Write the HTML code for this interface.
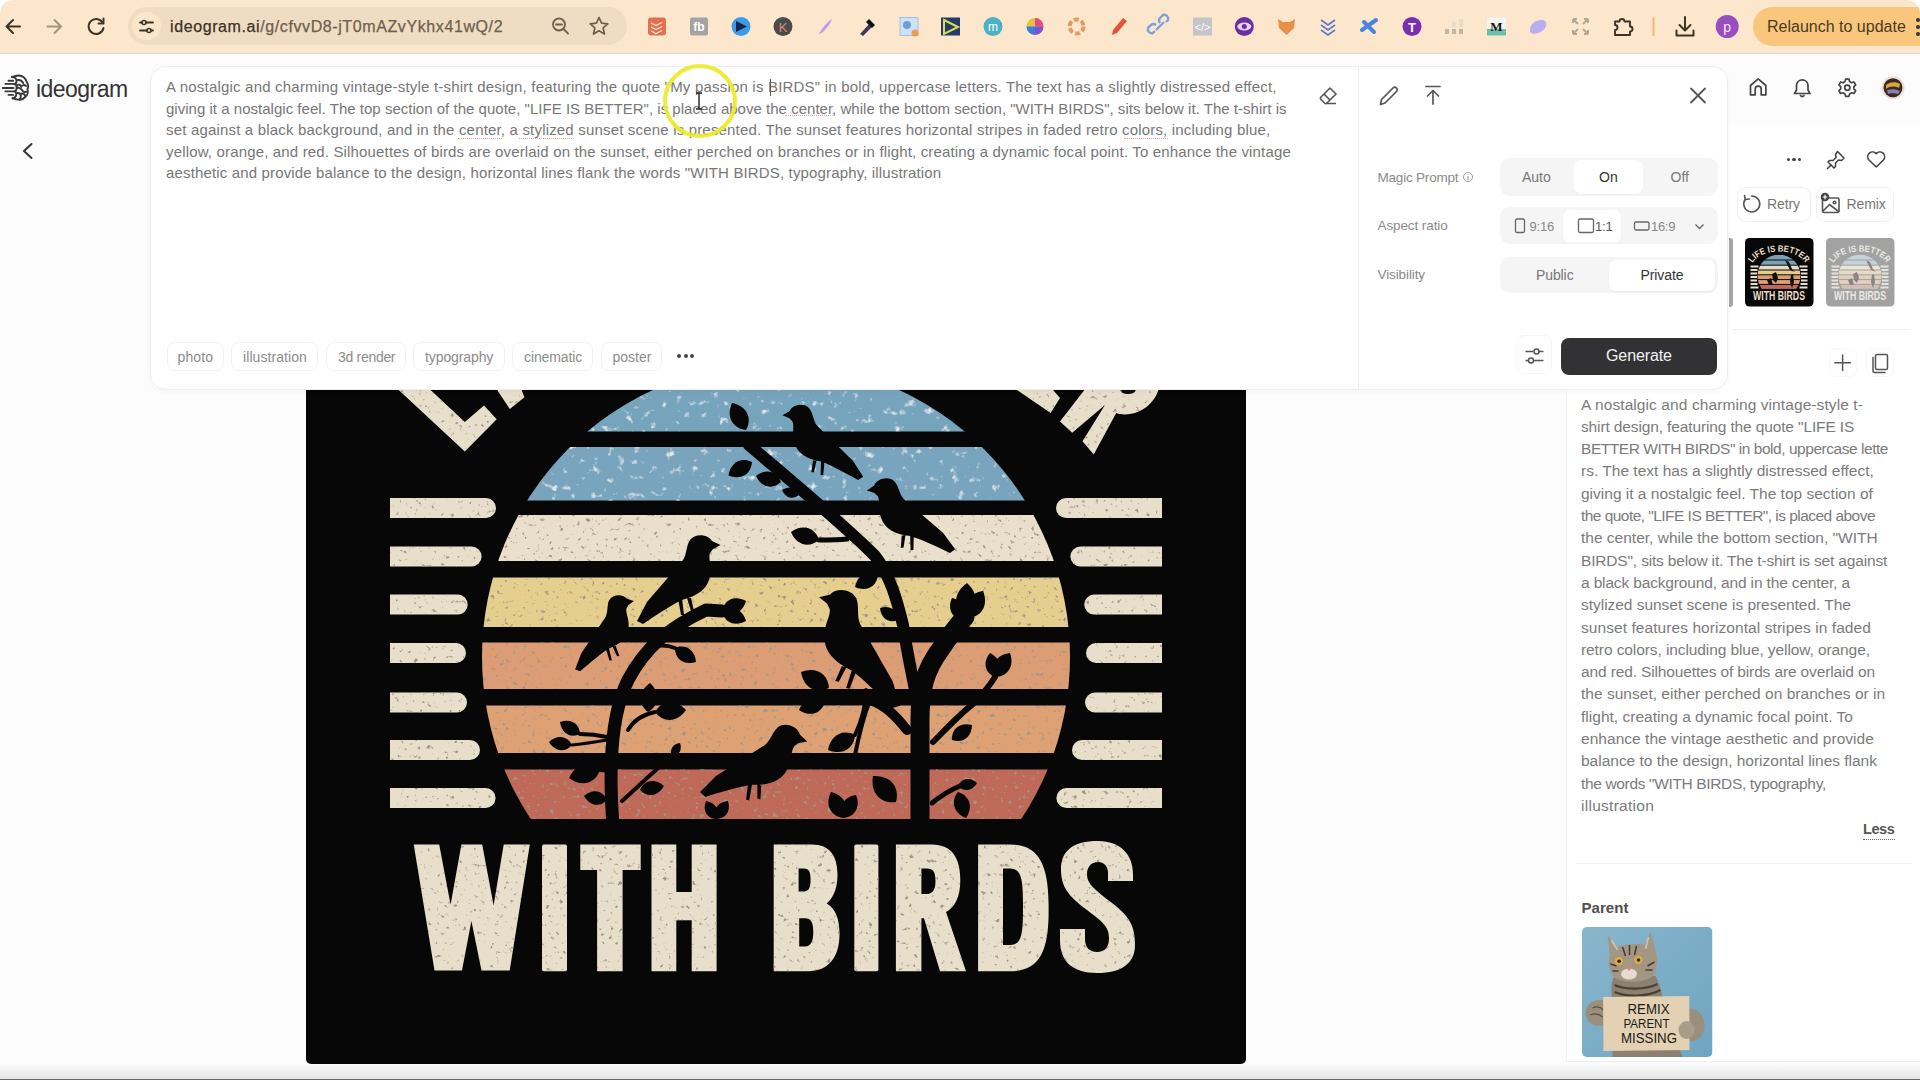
<!DOCTYPE html>
<html><head><meta charset="utf-8"><title>ideogram</title>
<style>
*{margin:0;padding:0;box-sizing:border-box}
html,body{width:1920px;height:1080px;overflow:hidden;background:#fcfcfc;font-family:"Liberation Sans",sans-serif;position:relative;-webkit-font-smoothing:antialiased}
.a{position:absolute}
.t{position:absolute;white-space:pre;line-height:1}
svg{position:absolute;overflow:visible}
</style></head><body>

<!-- ===== BROWSER BAR ===== -->
<div class="a" style="left:0;top:0;width:1920px;height:54px;background:#fde7cc;border-bottom:1px solid #e6d6c2"></div>
<!-- URL pill -->
<div class="a" style="left:128px;top:7px;width:499px;height:38px;border-radius:19px;background:#f0dcc2"></div>
<div class="a" style="left:132px;top:12px;width:29px;height:28px;border-radius:14px;background:#fbe6cc"></div>
<div class="t" style="left:170px;top:19px;font-size:16px;letter-spacing:0.6px;color:#6c604f;-webkit-text-stroke:0.25px currentColor"><span style="color:#3b3126">ideogram.ai</span>/g/cfvvD8-jT0mAZvYkhx41wQ/2</div>

<!-- toolbar icons -->
<svg style="left:0;top:0" width="1920" height="54" viewBox="0 0 1920 54">
<g fill="none" stroke="#3d3428" stroke-width="2" stroke-linecap="round" stroke-linejoin="round">
<path d="M20 26.5H7M13 20L6.5 26.5L13 33"/>
<path d="M47.5 26.5H60.5M54.5 20L61 26.5L54.5 33" stroke="#a3927e"/>
<path d="M102.5 22.5A7.5 7.5 0 1 0 103.5 28" />
<path d="M103.5 18.5V23.5H98.5" />
<path d="M140 22.5H142M146 22.5H153M140 30.5H147M151 30.5H153" stroke-width="1.8"/>
<circle cx="144" cy="22.5" r="2" stroke-width="1.6"/><circle cx="149" cy="30.5" r="2" stroke-width="1.6"/>
<circle cx="559" cy="24.5" r="6" stroke="#6b5f4f" stroke-width="1.8"/><path d="M563.5 29L568 33.5M556 24.5H562" stroke="#6b5f4f" stroke-width="1.8"/>
<path d="M599 17.5L601.6 23.2L607.8 23.8L603.1 27.9L604.5 34L599 30.8L593.5 34L594.9 27.9L590.2 23.8L596.4 23.2Z" stroke="#6b5f4f" stroke-width="1.7"/>
<path d="M1615 21.5H1619.5A2.5 2.5 0 0 1 1624.5 21.5H1630V26.5A2.5 2.5 0 0 1 1630 31.5V35H1615V30A2.5 2.5 0 0 0 1615 25Z" stroke="#3d3428" stroke-width="1.9"/>
<path d="M1653.5 18V35" stroke="#f2b86e" stroke-width="2"/>
<path d="M1685 17V30M1679.5 25L1685 30.5L1690.5 25M1676.5 30.5V35.5H1693.5V30.5" stroke-width="2"/>
</g>
<!-- extensions -->
<rect x="648" y="17.5" width="18" height="18" rx="3" fill="#e37050"/><path d="M651 23l5 2.5 6-3M651 27l5 2.5 6-3M651 31l5 2.5 6-3" stroke="#fde7cc" stroke-width="1.3" fill="none"/>
<rect x="690" y="17.5" width="18" height="18" rx="2" fill="#a3a3a3"/><text x="699" y="31" font-size="12" font-weight="700" fill="#fff" text-anchor="middle" font-family="Liberation Sans">fb</text>
<circle cx="741" cy="26.5" r="9.5" fill="#3a9be8"/><path d="M736 21L747 26.5L736 32Z" fill="#15264a"/>
<circle cx="783" cy="26.5" r="9.5" fill="#4b4b4b"/><text x="783" y="31.5" font-size="13" fill="#d88a7a" text-anchor="middle" font-family="Liberation Sans">K</text>
<path d="M819 34C822 28 827 22 832 19C830 24 826 30 820 34Z" fill="#c59ae8"/>
<path d="M860 34L870 23L873 26L863 36Z" fill="#3a3a60"/><path d="M869 19L875 25L872 28L866 22Z" fill="#111"/>
<rect x="900" y="17.5" width="18" height="18" fill="#cfe2f5" stroke="#9cc2ea" stroke-width="1"/><circle cx="907" cy="25" r="4" fill="#6b9fd8"/><circle cx="915" cy="33" r="3.5" fill="#ec9c56"/>
<rect x="941" y="17.5" width="19" height="18" fill="#273b6a"/><path d="M944 20L958 27L944 34Z" fill="none" stroke="#d8e04b" stroke-width="2"/>
<circle cx="993" cy="26.5" r="9.5" fill="#4cb1c2"/><text x="993" y="30.5" font-size="12" fill="#fff" text-anchor="middle" font-family="Liberation Sans">m</text>
<circle cx="1035" cy="26.5" r="8.5" fill="#e6c33c"/><path d="M1035 18A8.5 8.5 0 0 1 1043.5 26.5H1035Z" fill="#e64a8b"/><path d="M1035 35A8.5 8.5 0 0 1 1026.5 26.5H1035Z" fill="#3d7de0"/><path d="M1043.5 26.5A8.5 8.5 0 0 1 1035 35V26.5Z" fill="#7b4fd8"/>
<circle cx="1076.6" cy="26.5" r="7" fill="none" stroke="#e59a64" stroke-width="4" stroke-dasharray="5 2.5"/>
<path d="M1112 35L1113 30L1123 18L1127 21L1117 33Z" fill="#e2553a"/>
<path d="M1155 31l-2 2a4 4 0 0 1-5-5l3-3a4 4 0 0 1 5 0M1166 22l2-2a4 4 0 0 0-5-5l-3 3a4 4 0 0 0 0 5M1156 30l8-8" fill="none" stroke="#7ba2e0" stroke-width="2.4"/>
<rect x="1193" y="17.5" width="19" height="18" fill="#c3c5cb"/><text x="1202.5" y="30.5" font-size="11" fill="#fff" text-anchor="middle" font-family="Liberation Sans">&lt;/&gt;</text>
<circle cx="1244.3" cy="26.5" r="9.5" fill="#6b2f9e"/><ellipse cx="1244.3" cy="26.5" rx="7" ry="4" fill="#e8d0f5"/><circle cx="1244.3" cy="26.5" r="2.5" fill="#6b2f9e"/>
<path d="M1278 19L1283 22H1290L1295 19L1294 28L1286.5 35L1279 28Z" fill="#e8904a"/>
<path d="M1321 20L1328 25L1335 20M1321 25L1328 30L1335 25M1321 30L1328 35L1335 30" fill="none" stroke="#5a77c8" stroke-width="1.6"/>
<path d="M1362 30L1376 20M1364 22L1374 32" stroke="#4a84e0" stroke-width="4" stroke-linecap="round"/>
<circle cx="1412" cy="26.5" r="9.5" fill="#7a2fb0"/><text x="1412" y="31.5" font-size="13" font-weight="700" fill="#fff" text-anchor="middle" font-family="Liberation Sans">T</text>
<path d="M1445 29h4v5h-4zM1452 29h4v5h-4zM1459 29h4v5h-4z" fill="#c1b5a4"/><path d="M1452 22h4v5h-4zM1459 19h4v8h-4z" fill="#e5dccf"/>
<rect x="1487" y="17.5" width="19" height="18" fill="#f4f4f4"/><rect x="1487" y="29" width="19" height="6.5" fill="#6cc0a8"/><text x="1496.5" y="31" font-size="13" font-weight="700" fill="#111" text-anchor="middle" font-family="Liberation Serif">M</text>
<path d="M1530 32C1529 25 1535 19 1543 20C1548 21 1547 28 1542 31C1538 34 1532 35 1530 32Z" fill="#b9aef0"/>
<path d="M1573 19L1578 24M1588 19L1583 24M1573 34L1578 29M1588 34L1583 29M1573 19h4M1573 19v4M1588 19h-4M1588 19v4M1573 34h4M1573 34v-4M1588 34h-4M1588 34v-4" stroke="#b0a796" stroke-width="2" fill="none"/>
<circle cx="1727.2" cy="26.5" r="11.5" fill="#9a4dbf"/><text x="1727.2" y="31.5" font-size="14" fill="#f3e6fa" text-anchor="middle" font-family="Liberation Sans">p</text>
</svg>
<div class="a" style="left:1753px;top:7px;width:200px;height:39px;border-radius:19.5px;background:#f9c67b"></div>
<div class="t" style="left:1767px;top:19px;font-size:16px;color:#4b3a1f;letter-spacing:0px">Relaunch to update</div>
<div class="a" style="left:1916px;top:18px;width:4px;height:4px;border-radius:2px;background:#333"></div>
<div class="a" style="left:1916px;top:25px;width:4px;height:4px;border-radius:2px;background:#333"></div>
<div class="a" style="left:1916px;top:32px;width:4px;height:4px;border-radius:2px;background:#333"></div>
<div class="a" style="left:0;top:0;width:12px;height:12px;background:radial-gradient(circle at 12px 12px,transparent 11px,#fff 12px)"></div>
<div class="a" style="left:1908px;top:0;width:12px;height:12px;background:radial-gradient(circle at 0 12px,transparent 11px,#fff 12px)"></div>

<!-- ===== PAGE ===== -->
<!-- main image -->

<svg style="left:306px;top:390px;clip-path:inset(0 round 0 0 5px 5px)" width="940" height="674" viewBox="306 390 940 674">
<defs>
<filter id="gr" x="0" y="0" width="100%" height="100%">
<feTurbulence type="fractalNoise" baseFrequency="0.22" numOctaves="2" seed="7" result="n"/>
<feColorMatrix in="n" type="matrix" values="0 0 0 0 0.35  0 0 0 0 0.31  0 0 0 0 0.25  -7 0 0 0 2.5" result="sp"/>
<feComposite in="sp" in2="SourceGraphic" operator="in" result="spIn"/>
<feMerge><feMergeNode in="SourceGraphic"/><feMergeNode in="spIn"/></feMerge>
</filter>
<filter id="grb" x="0" y="0" width="100%" height="100%">
<feTurbulence type="fractalNoise" baseFrequency="0.12" numOctaves="3" seed="11" result="n"/>
<feColorMatrix in="n" type="matrix" values="0 0 0 0 0.8  0 0 0 0 0.87  0 0 0 0 0.92  4 0 0 0 -2.55" result="sp"/>
<feComposite in="sp" in2="SourceGraphic" operator="in" result="spIn"/>
<feMerge><feMergeNode in="SourceGraphic"/><feMergeNode in="spIn"/></feMerge>
</filter>
<clipPath id="sun"><circle cx="776" cy="657" r="294"/></clipPath>
<path id="bird" d="M17.5 1 L9 -3 C5 -10 -8 -11 -13 -4 C-17 2 -16 10 -20 16 C-30 28 -45 45 -56 58 L-66 77 L-60 80 C-45 70 -30 60 -21 56 C-6 52 5 45 7 32 C9 22 5 14 7 9 L10 5 Z M-25 54 L-22 71 L-19 71 L-21 54 Z M-16 54 L-12 67 L-9 67 L-12 54 Z"/>
</defs>
<rect x="306" y="390" width="940" height="674" fill="#070707"/>
<g clip-path="url(#sun)" filter="url(#grb)">
<rect x="400" y="340" width="760" height="91.5" fill="#77a4bd"/>
<rect x="400" y="447" width="760" height="53.5" fill="#78a5bd"/>
</g>
<g clip-path="url(#sun)" filter="url(#gr)">
<rect x="400" y="515" width="760" height="46" fill="#e9dfcb"/>
<rect x="400" y="577.5" width="760" height="49.5" fill="#e6ce8e"/>
<rect x="400" y="642.5" width="760" height="46.5" fill="#dc9d75"/>
<rect x="400" y="705.5" width="760" height="47.5" fill="#dea173"/>
<rect x="400" y="769.5" width="760" height="49.5" fill="#bf6959"/>
</g>
<g fill="#e8dfca" filter="url(#gr)">
<path d="M390 498h96a10 10 0 0 1 0 20h-96z"/>
<path d="M390 546.5h81.6a10 10 0 0 1 0 20h-81.6z"/>
<path d="M390 594.6h67.7a10 10 0 0 1 0 20h-67.7z"/>
<path d="M390 643h66a10 10 0 0 1 0 20h-66z"/>
<path d="M390 692.5h67a10 10 0 0 1 0 20h-67z"/>
<path d="M390 740h80a10 10 0 0 1 0 20h-80z"/>
<path d="M390 788h95.6a10 10 0 0 1 0 20h-95.6z"/>
<path d="M1162 498h-96a10 10 0 0 0 0 20h96z"/>
<path d="M1162 546.5h-81.6a10 10 0 0 0 0 20h81.6z"/>
<path d="M1162 594.6h-67.7a10 10 0 0 0 0 20h67.7z"/>
<path d="M1162 643h-66a10 10 0 0 0 0 20h66z"/>
<path d="M1162 692.5h-67a10 10 0 0 0 0 20h67z"/>
<path d="M1162 740h-80a10 10 0 0 0 0 20h80z"/>
<path d="M1162 788h-95.6a10 10 0 0 0 0 20h95.6z"/>
<!-- arc text remnants -->
<path d="M398.7 390 L430.6 390 L464.8 422 L484 405.6 L496.7 419.2 L464.8 451.6 Z"/>
<path d="M497.2 390 L521.6 390 L524.4 397.2 L509.8 409 Z"/>
<path d="M1017 390 L1053 390 L1060 398 L1050.6 413 Z"/>
<path d="M1084.4 390 L1060 421.6 L1072.2 432.8 L1105 405 L1082.5 441.2 L1093.7 454.4 L1116.2 413 C1130 418 1152 410 1158.4 390 Z"/>
<ellipse cx="1128" cy="390.5" rx="7.5" ry="3.5" fill="#070707"/>
<!-- WITH BIRDS -->
<path d="M413.7 844.4 L439.2 844.4 L450.6 904.8 L461.4 844.4 L482.2 844.4 L493.6 905.5 L503.7 844.4 L529.8 844.4 L509.7 970.6 L481.5 970.6 L471.4 920.9 L462 970.6 L434.5 970.6 Z"/>
<rect x="542" y="844.4" width="25" height="126.8" rx="2"/>
<path d="M580.3 844.4 H640.7 V870 H622.6 V971.2 H597.1 V870 H580.3 Z"/>
<path d="M651.5 844.4 H676.3 V892 H691.7 V844.4 H716.6 V971.2 H691.7 V920.2 H676.3 V971.2 H651.5 Z"/>
<path fill-rule="evenodd" d="M773.7 844.4 H812 C830 844.4 837.5 856 837.5 875 C837.5 890 832 899 826.7 903.5 C835 908 839.5 918 839.5 934 C839.5 958 828 971.2 808 971.2 H773.7 Z M798.6 868.6 V891.4 H804 C809 891.4 810.6 887 810.6 880 C810.6 872 809 868.6 804 868.6 Z M799.2 918.2 V946.4 H805 C811 946.4 813.3 941 813.3 932 C813.3 922 811 918.2 805 918.2 Z"/>
<rect x="854.3" y="844.4" width="24.1" height="126.8" rx="2"/>
<path fill-rule="evenodd" d="M895.9 844.4 H932 C952 844.4 960.3 858 960.3 880 C960.3 897 955 907 946 912 L966 971.2 H940 L924 918.2 H921.4 V971.2 H895.9 Z M921.4 868.6 V894 H927 C933 894 935.5 889 935.5 881 C935.5 872 933 868.6 927 868.6 Z"/>
<path fill-rule="evenodd" d="M978.1 844.4 H1010 C1037 844.4 1048.6 862 1048.6 905 V912 C1048.6 955 1037 971.2 1010 971.2 H978.1 Z M1003 868.6 V945 H1010 C1020 945 1023 938 1023 912 V902 C1023 876 1020 868.6 1010 868.6 Z"/>
<path d="M1098 841 C1121 841 1133 855 1133 874 V881 H1108 V873 C1108 866 1104 862 1098 862 C1091 862 1087 867 1087 874 C1087 884 1094 889 1112 903 C1130 917 1135 926 1135 945 C1135 963 1122 973 1097 973 C1072 973 1060 961 1060 940 V929 H1085 V939 C1085 947 1089 952 1097 952 C1105 952 1109 947 1109 938 C1109 927 1103 922 1087 910 C1067 895 1061 886 1061 869 C1061 851 1073 841 1098 841 Z"/>
</g>
<!-- branches -->
<g fill="none" stroke="#070707" stroke-linecap="round" stroke-linejoin="round">
<path d="M749 445 C790 480 850 530 875 556 C890 575 897 600 903 625 C908 660 918 700 920 720" stroke-width="12"/>
<path d="M920 825 V720 C920 690 925 670 940 650 C950 635 958 625 965 617" stroke-width="19"/>
<path d="M907 730 C895 715 885 705 870 700" stroke-width="10"/>
<path d="M870 700 C862 720 858 740 855 755" stroke-width="4"/>
<path d="M613 825 C608 760 612 712 628 680 C645 648 668 628 706 610 L722 611" stroke-width="13"/>
<path d="M628 730 C635 718 645 714 655 712" stroke-width="4"/>
<path d="M607 737 C598 735 590 734 580 734" stroke-width="4"/>
<path d="M607 740 C595 742 582 744 572 745" stroke-width="3"/>
<path d="M614 772 C610 771 605 770 600 770" stroke-width="4"/>
<path d="M622 801 C640 785 655 770 672 756" stroke-width="4"/>
<path d="M655 646 C663 645 670 646 675 648" stroke-width="4"/>
<path d="M847 539 C838 540 828 540 819 540" stroke-width="5"/>
<path d="M933 742 C950 725 962 712 972 705 C982 695 990 685 995 677" stroke-width="6"/>
<path d="M932 803 C942 795 950 790 960 786" stroke-width="5"/>
<path d="M855 735 C862 720 866 705 866 690" stroke-width="4"/>
</g>
<g fill="#070707">
<path d="M0 0C7.6 -11.6 21.3 -11.6 30.4 0C21.3 11.6 7.6 11.6 0 0Z" transform="translate(746 430) rotate(-117.4)"/>
<path d="M0 0C6.8 -10.3 19.0 -10.3 27.2 0C19.0 10.3 6.8 10.3 0 0Z" transform="translate(752 462) rotate(150)"/>
<path d="M0 0C6.4 -9.8 18.0 -9.8 25.7 0C18.0 9.8 6.4 9.8 0 0Z" transform="translate(781 482) rotate(-166.5)"/>
<path d="M0 0C4.4 -6.7 12.4 -6.7 17.7 0C12.4 6.7 4.4 6.7 0 0Z" transform="translate(799 495) rotate(-163.6)"/>
<path d="M0 0C7.3 -11.1 20.4 -11.1 29.1 0C20.4 11.1 7.3 11.1 0 0Z" transform="translate(819 540) rotate(-164.1)"/>
<path d="M0 0C6.5 -9.9 18.2 -9.9 25.9 0C18.2 9.9 6.5 9.9 0 0Z" transform="translate(878 575) rotate(152.4)"/>
<path d="M0 0C6.5 -9.9 18.2 -9.9 26.0 0C18.2 9.9 6.5 9.9 0 0Z" transform="translate(722 611) rotate(-22.6)"/>
<path d="M0 0C6.5 -9.9 18.2 -9.9 26.0 0C18.2 9.9 6.5 9.9 0 0Z" transform="translate(722 611) rotate(22.6)"/>
<path d="M0 0C6.3 -9.6 17.7 -9.6 25.2 0C17.7 9.6 6.3 9.6 0 0Z" transform="translate(675 648) rotate(33.7)"/>
<path d="M0 0C7.8 -11.8 21.7 -11.8 31.1 0C21.7 11.8 7.8 11.8 0 0Z" transform="translate(655 712) rotate(-3.7)"/>
<path d="M0 0C7.3 -11.0 20.3 -11.0 29.1 0C20.3 11.0 7.3 11.0 0 0Z" transform="translate(648 712) rotate(-86.1)"/>
<path d="M0 0C5.8 -8.9 16.3 -8.9 23.3 0C16.3 8.9 5.8 8.9 0 0Z" transform="translate(580 734) rotate(-149.0)"/>
<path d="M0 0C5.8 -8.8 16.2 -8.8 23.2 0C16.2 8.8 5.8 8.8 0 0Z" transform="translate(572 745) rotate(-172.6)"/>
<path d="M0 0C8.0 -12.2 22.4 -12.2 32.0 0C22.4 12.2 8.0 12.2 0 0Z" transform="translate(600 770) rotate(165.5)"/>
<path d="M0 0C5.8 -8.9 16.3 -8.9 23.3 0C16.3 8.9 5.8 8.9 0 0Z" transform="translate(607 800) rotate(-170.1)"/>
<path d="M0 0C6.1 -9.2 17.0 -9.2 24.3 0C17.0 9.2 6.1 9.2 0 0Z" transform="translate(640 790) rotate(-9.5)"/>
<path d="M0 0C3.8 -5.8 10.7 -5.8 15.3 0C10.7 5.8 3.8 5.8 0 0Z" transform="translate(672 756) rotate(-58.4)"/>
<path d="M0 0C5.1 -7.8 14.4 -7.8 20.6 0C14.4 7.8 5.1 7.8 0 0Z" transform="translate(716 819) rotate(-119.1)"/>
<path d="M0 0C5.4 -8.2 15.1 -8.2 21.6 0C15.1 8.2 5.4 8.2 0 0Z" transform="translate(716 819) rotate(-56.3)"/>
<path d="M0 0C8.1 -12.3 22.6 -12.3 32.2 0C22.6 12.3 8.1 12.3 0 0Z" transform="translate(829 688) rotate(-150.3)"/>
<path d="M0 0C6.8 -10.3 19.0 -10.3 27.2 0C19.0 10.3 6.8 10.3 0 0Z" transform="translate(825 702) rotate(162.9)"/>
<path d="M0 0C7.7 -11.7 21.6 -11.7 30.9 0C21.6 11.7 7.7 11.7 0 0Z" transform="translate(855 735) rotate(150.9)"/>
<path d="M0 0C7.2 -10.9 20.0 -10.9 28.6 0C20.0 10.9 7.2 10.9 0 0Z" transform="translate(843 818) rotate(-114.8)"/>
<path d="M0 0C6.6 -10.0 18.5 -10.0 26.4 0C18.5 10.0 6.6 10.0 0 0Z" transform="translate(843 818) rotate(-60.5)"/>
<path d="M0 0C8.7 -13.2 24.3 -13.2 34.7 0C24.3 13.2 8.7 13.2 0 0Z" transform="translate(896 802) rotate(-131.5)"/>
<path d="M0 0C5.4 -8.2 15.1 -8.2 21.6 0C15.1 8.2 5.4 8.2 0 0Z" transform="translate(898 620) rotate(-146.3)"/>
<path d="M0 0C6.1 -9.3 17.2 -9.3 24.6 0C17.2 9.3 6.1 9.3 0 0Z" transform="translate(963 620) rotate(-116.6)"/>
<path d="M0 0C8.8 -13.3 24.5 -13.3 35.1 0C24.5 13.3 8.8 13.3 0 0Z" transform="translate(965 618) rotate(-86.7)"/>
<path d="M0 0C7.7 -11.7 21.6 -11.7 30.9 0C21.6 11.7 7.7 11.7 0 0Z" transform="translate(968 618) rotate(-60.9)"/>
<path d="M0 0C6.1 -9.3 17.2 -9.3 24.5 0C17.2 9.3 6.1 9.3 0 0Z" transform="translate(995 677) rotate(-101.8)"/>
<path d="M0 0C7.1 -10.8 19.8 -10.8 28.3 0C19.8 10.8 7.1 10.8 0 0Z" transform="translate(995 677) rotate(-58.0)"/>
<path d="M0 0C6.2 -9.5 17.5 -9.5 25.0 0C17.5 9.5 6.2 9.5 0 0Z" transform="translate(952 740) rotate(-36.9)"/>
<path d="M0 0C4.8 -7.3 13.5 -7.3 19.2 0C13.5 7.3 4.8 7.3 0 0Z" transform="translate(958 786) rotate(-9.0)"/>
<path d="M0 0C6.8 -10.3 19.0 -10.3 27.2 0C19.0 10.3 6.8 10.3 0 0Z" transform="translate(958 792) rotate(72.9)"/>
<use href="#bird" transform="translate(798 413) scale(-1 1) rotate(5) scale(0.9)"/>
<use href="#bird" transform="translate(883 487) scale(-1 1) rotate(8.6) scale(0.94)"/>
<use href="#bird" transform="translate(703 544) scale(1 1)"/>
<use href="#bird" transform="translate(620 602) rotate(-7) scale(0.8)"/>
<use href="#bird" transform="translate(840 600) scale(-1 1) rotate(-11) scale(1.2)"/>
<use href="#bird" transform="translate(790 735) rotate(17) scale(1.05)"/>
</g>
</svg>


<!-- right panel -->
<div class="a" style="left:1566px;top:125px;width:354px;height:937px;background:#fff;border-left:1px solid #f1f1f1;border-bottom:1px solid #eee"></div>

<!-- right header icons -->
<svg style="left:1740px;top:70px" width="180" height="36" viewBox="1740 70 180 36">
<g fill="none" stroke="#444" stroke-width="1.7" stroke-linecap="round" stroke-linejoin="round">
<path d="M1750.5 85.5L1758.2 78.8L1765.9 85.5V94.8H1761.2V89.2A3 3 0 0 0 1755.2 89.2V94.8H1750.5Z"/>
<path d="M1796.5 90V85A5.8 5.8 0 0 1 1808 85V90L1810 93.5H1794.5Z"/><path d="M1800.5 95.5A2 2 0 0 0 1804 95.5"/>
<circle cx="1847.3" cy="87.7" r="2.6"/>
<path d="M1845.6 79.2h3.4l.6 2.4 2 1.1 2.4-.7 1.7 2.9-1.8 1.7v2.3l1.8 1.7-1.7 2.9-2.4-.7-2 1.1-.6 2.4h-3.4l-.6-2.4-2-1.1-2.4.7-1.7-2.9 1.8-1.7v-2.3l-1.8-1.7 1.7-2.9 2.4.7 2-1.1z"/>
</g>
<circle cx="1893" cy="87.7" r="11.5" fill="#f1dcd6"/>
<circle cx="1893" cy="87.7" r="9.5" fill="#3a2a20"/>
<path d="M1886 85C1889 82 1896 81 1900 84L1899 88C1895 86 1890 86 1886 89Z" fill="#d8a83a"/>
<path d="M1887 90C1891 89 1896 89 1900 91L1898 94C1894 93 1890 93 1888 94Z" fill="#8a7ab8"/>
</svg>

<!-- right panel items -->
<div class="a" style="left:1786.7px;top:157.5px;width:3.6px;height:3.6px;border-radius:50%;background:#444"></div>
<div class="a" style="left:1792.2px;top:157.5px;width:3.6px;height:3.6px;border-radius:50%;background:#444"></div>
<div class="a" style="left:1797.7px;top:157.5px;width:3.6px;height:3.6px;border-radius:50%;background:#444"></div>
<svg style="left:1820px;top:145px" width="75" height="28" viewBox="1820 145 75 28">
<g fill="none" stroke="#444" stroke-width="1.6" stroke-linecap="round" stroke-linejoin="round">
<path d="M1837.5 151.5L1844 158L1841.5 160.5L1838.5 160L1835.5 163L1835.5 166.5L1834 168L1828 162L1829.5 160.5L1833 160.5L1836 157.5L1835.5 154.5Z"/>
<path d="M1831 165L1827.5 168.5"/>
<path d="M1876.2 167L1869 160A4.4 4.4 0 0 1 1876.2 153.6A4.4 4.4 0 0 1 1883.4 160Z"/>
</g>
</svg>
<div class="a" style="left:1736.5px;top:187px;width:74px;height:34.5px;border-radius:9px;border:1px solid #f0f0f0;background:#fff"></div>
<div class="a" style="left:1816px;top:187px;width:78px;height:34.5px;border-radius:9px;border:1px solid #f0f0f0;background:#fff"></div>
<svg style="left:1740px;top:190px" width="110" height="30" viewBox="1740 190 110 30">
<g fill="none" stroke="#555" stroke-width="1.6" stroke-linecap="round" stroke-linejoin="round">
<path d="M1745.3 199.3A8 8 0 1 0 1751.5 196"/><path d="M1744.5 195.5L1745.3 199.5L1749.3 199"/>
<rect x="1822.5" y="198" width="16.5" height="14.5" rx="1.5"/><path d="M1823 211L1829.5 204.5L1838.5 211.5"/><circle cx="1834.5" cy="202.5" r="1.3"/>
</g>
<circle cx="1825" cy="197" r="4.3" fill="#444"/><path d="M1825 194.8V199.2M1822.8 197H1827.2" stroke="#fff" stroke-width="1.2"/>
</svg>
<div class="t" style="left:1767px;top:197px;font-size:14px;color:#777;letter-spacing:-0.1px">Retry</div>
<div class="t" style="left:1846.5px;top:197px;font-size:14px;color:#777;letter-spacing:-0.1px">Remix</div>

<!-- thumbnails -->
<div class="a" style="left:1728.5px;top:238px;width:4px;height:69px;background:#a6a6a6;border-radius:0 3px 3px 0"></div>
<svg style="left:1744.9px;top:238px" width="69" height="69" viewBox="0 0 69 69">
<defs><clipPath id="tc1"><circle cx="34" cy="38" r="21.5"/></clipPath><path id="arc1" d="M7 29A27 15.5 0 0 1 61 29"/></defs>
<rect width="68.5" height="68.5" rx="4.5" fill="#080808"/>
<g clip-path="url(#tc1)"><rect x="0" y="17" width="69" height="4.5" fill="#7aa2b7"/><rect x="0" y="22.5" width="69" height="4.2" fill="#7aa2b7"/><rect x="0" y="27.7" width="69" height="3.8" fill="#e6dbc5"/><rect x="0" y="32.5" width="69" height="3.8" fill="#e4cc8c"/><rect x="0" y="37.3" width="69" height="3.8" fill="#dc9d75"/><rect x="0" y="42.1" width="69" height="3.8" fill="#dea173"/><rect x="0" y="46.9" width="69" height="4" fill="#bf6959"/></g>
<g fill="#111"><path d="M40 22L44 24L47 31L50 34L45 32L42 26Z"/><path d="M27 36L31 34L33 40L31 45L28 42Z"/><path d="M46 37L48 36L49 44L47 50L45 44Z"/><path d="M22 42L26 40L28 47L24 47Z"/></g>
<g fill="#e8dfca"><rect x="5.5" y="27.5" width="8" height="2"/><rect x="5.5" y="31" width="7" height="2"/><rect x="5.5" y="34.5" width="6.5" height="2"/><rect x="5.5" y="38" width="6.5" height="2"/><rect x="5.5" y="41.5" width="6.5" height="2"/><rect x="5.5" y="45" width="7" height="2"/><rect x="5.5" y="48.5" width="8" height="2"/>
<rect x="54.5" y="27.5" width="8" height="2"/><rect x="55.5" y="31" width="7" height="2"/><rect x="56" y="34.5" width="6.5" height="2"/><rect x="56" y="38" width="6.5" height="2"/><rect x="56" y="41.5" width="6.5" height="2"/><rect x="55.5" y="45" width="7" height="2"/><rect x="54.5" y="48.5" width="8" height="2"/></g>
<text font-size="9" font-weight="700" fill="#e8dfca" font-family="Liberation Sans"><textPath href="#arc1" startOffset="50%" text-anchor="middle" textLength="60" lengthAdjust="spacingAndGlyphs">LIFE IS BETTER</textPath></text>
<text x="34" y="62.3" font-size="12.5" font-weight="700" fill="#e8dfca" text-anchor="middle" font-family="Liberation Sans" textLength="52" lengthAdjust="spacingAndGlyphs">WITH BIRDS</text>
</svg>
<svg style="left:1826.1px;top:238px" width="69" height="69" viewBox="0 0 69 69">
<defs><clipPath id="tc2"><circle cx="34" cy="38" r="21.5"/></clipPath><path id="arc2" d="M7 29A27 15.5 0 0 1 61 29"/></defs>
<rect width="68.5" height="68.5" rx="4.5" fill="#a2a2a2"/>
<g clip-path="url(#tc2)"><rect x="0" y="17" width="69" height="4.5" fill="#c5d2d8"/><rect x="0" y="22.5" width="69" height="4.2" fill="#c5d2d8"/><rect x="0" y="27.7" width="69" height="3.8" fill="#e9e4da"/><rect x="0" y="32.5" width="69" height="3.8" fill="#e6dcc3"/><rect x="0" y="37.3" width="69" height="3.8" fill="#e3cfc0"/><rect x="0" y="42.1" width="69" height="3.8" fill="#e3d0bf"/><rect x="0" y="46.9" width="69" height="4" fill="#d6bcb5"/></g>
<g fill="#8a8580"><path d="M40 22L44 24L47 31L50 34L45 32L42 26Z"/><path d="M27 36L31 34L33 40L31 45L28 42Z"/><path d="M46 37L48 36L49 44L47 50L45 44Z"/><path d="M22 42L26 40L28 47L24 47Z"/></g>
<g fill="#e6e3dd"><rect x="5.5" y="27.5" width="8" height="2"/><rect x="5.5" y="31" width="7" height="2"/><rect x="5.5" y="34.5" width="6.5" height="2"/><rect x="5.5" y="38" width="6.5" height="2"/><rect x="5.5" y="41.5" width="6.5" height="2"/><rect x="5.5" y="45" width="7" height="2"/><rect x="5.5" y="48.5" width="8" height="2"/>
<rect x="54.5" y="27.5" width="8" height="2"/><rect x="55.5" y="31" width="7" height="2"/><rect x="56" y="34.5" width="6.5" height="2"/><rect x="56" y="38" width="6.5" height="2"/><rect x="56" y="41.5" width="6.5" height="2"/><rect x="55.5" y="45" width="7" height="2"/><rect x="54.5" y="48.5" width="8" height="2"/></g>
<text font-size="9" font-weight="700" fill="#ebe9e4" font-family="Liberation Sans"><textPath href="#arc2" startOffset="50%" text-anchor="middle" textLength="60" lengthAdjust="spacingAndGlyphs">LIFE IS BETTER</textPath></text>
<text x="34" y="62.3" font-size="12.5" font-weight="700" fill="#ebe9e4" text-anchor="middle" font-family="Liberation Sans" textLength="52" lengthAdjust="spacingAndGlyphs">WITH BIRDS</text>
</svg>
<div class="a" style="left:1732px;top:329px;width:177px;height:1px;background:#f0f0f0"></div>
<div class="a" style="left:1829px;top:348px;width:28px;height:29px;border-radius:7px;border:1px solid #f7f7f7"></div>
<div class="a" style="left:1866px;top:348px;width:28px;height:29px;border-radius:7px;border:1px solid #f7f7f7"></div>
<svg style="left:1830px;top:350px" width="64" height="26" viewBox="1830 350 64 26">
<g fill="none" stroke="#555" stroke-width="1.5" stroke-linecap="round" stroke-linejoin="round">
<path d="M1842.6 355V370.5M1834.8 362.7H1850.4"/>
<rect x="1875.5" y="354.5" width="12" height="15" rx="1.5"/><path d="M1873 357.5V371A1.5 1.5 0 0 0 1874.5 372.5H1885"/>
</g>
</svg>

<!-- description -->
<div class="t" style="left:1581px;top:396.5px;font-size:15.5px;color:#7b7b7b;letter-spacing:0.09px">A nostalgic and charming vintage-style t-</div>
<div class="t" style="left:1581px;top:418.8px;font-size:15.5px;color:#7b7b7b;letter-spacing:-0.13px">shirt design, featuring the quote "LIFE IS</div>
<div class="t" style="left:1581px;top:441.1px;font-size:15.5px;color:#7b7b7b;letter-spacing:-0.46px">BETTER WITH BIRDS" in bold, uppercase lette</div>
<div class="t" style="left:1581px;top:463.4px;font-size:15.5px;color:#7b7b7b;letter-spacing:0.01px">rs. The text has a slightly distressed effect,</div>
<div class="t" style="left:1581px;top:485.7px;font-size:15.5px;color:#7b7b7b;letter-spacing:0.0px">giving it a nostalgic feel. The top section of</div>
<div class="t" style="left:1581px;top:508.0px;font-size:15.5px;color:#7b7b7b;letter-spacing:-0.54px">the quote, "LIFE IS BETTER", is placed above</div>
<div class="t" style="left:1581px;top:530.3px;font-size:15.5px;color:#7b7b7b;letter-spacing:0.0px">the center, while the bottom section, "WITH</div>
<div class="t" style="left:1581px;top:552.6px;font-size:15.5px;color:#7b7b7b;letter-spacing:-0.17px">BIRDS", sits below it. The t-shirt is set against</div>
<div class="t" style="left:1581px;top:574.9px;font-size:15.5px;color:#7b7b7b;letter-spacing:-0.15px">a black background, and in the center, a</div>
<div class="t" style="left:1581px;top:597.2px;font-size:15.5px;color:#7b7b7b;letter-spacing:-0.03px">stylized sunset scene is presented. The</div>
<div class="t" style="left:1581px;top:619.5px;font-size:15.5px;color:#7b7b7b;letter-spacing:0.07px">sunset features horizontal stripes in faded</div>
<div class="t" style="left:1581px;top:641.8px;font-size:15.5px;color:#7b7b7b;letter-spacing:-0.09px">retro colors, including blue, yellow, orange,</div>
<div class="t" style="left:1581px;top:664.1px;font-size:15.5px;color:#7b7b7b;letter-spacing:-0.13px">and red. Silhouettes of birds are overlaid on</div>
<div class="t" style="left:1581px;top:686.4px;font-size:15.5px;color:#7b7b7b;letter-spacing:0.02px">the sunset, either perched on branches or in</div>
<div class="t" style="left:1581px;top:708.7px;font-size:15.5px;color:#7b7b7b;letter-spacing:0.02px">flight, creating a dynamic focal point. To</div>
<div class="t" style="left:1581px;top:731.0px;font-size:15.5px;color:#7b7b7b;letter-spacing:0.04px">enhance the vintage aesthetic and provide</div>
<div class="t" style="left:1581px;top:753.3px;font-size:15.5px;color:#7b7b7b;letter-spacing:-0.01px">balance to the design, horizontal lines flank</div>
<div class="t" style="left:1581px;top:775.6px;font-size:15.5px;color:#7b7b7b;letter-spacing:-0.35px">the words "WITH BIRDS, typography,</div>
<div class="t" style="left:1581px;top:797.9px;font-size:15.5px;color:#7b7b7b;letter-spacing:0.27px">illustration</div>
<div class="t" style="left:1863px;top:822px;font-size:14.5px;font-weight:700;color:#555;letter-spacing:-0.4px">Less</div>
<div class="a" style="left:1863px;top:839px;width:32px;height:0;border-top:1.5px dotted #666"></div>
<div class="a" style="left:1575px;top:863px;width:338px;height:1px;background:#f3f3f3"></div>
<div class="t" style="left:1581.5px;top:900px;font-size:15px;font-weight:700;color:#505050;letter-spacing:0.05px">Parent</div>
<svg style="left:1581.5px;top:927px" width="130.5" height="130" viewBox="1581.5 927 130.5 130">
<defs><linearGradient id="catbg" x1="0" y1="0" x2="1" y2="1"><stop offset="0" stop-color="#89b6cd"/><stop offset="1" stop-color="#6fa4c0"/></linearGradient>
<clipPath id="catclip"><rect x="1581.5" y="927" width="130.5" height="130" rx="5"/></clipPath></defs>
<g clip-path="url(#catclip)">
<rect x="1581.5" y="927" width="130.5" height="130" fill="url(#catbg)"/>
<!-- body -->
<path d="M1612 1057V1000C1610 990 1611 982 1613 978L1655 976C1660 985 1662 995 1663 1005L1682 1057Z" fill="#8c8070"/>
<path d="M1614 985C1625 990 1645 990 1657 984M1614 992C1625 997 1648 997 1660 990" stroke="#4a4035" stroke-width="2.2" fill="none"/>
<!-- head -->
<path d="M1607 935L1617 947C1624 944 1636 943 1644 945L1650 931.5L1655 950C1658 960 1656 972 1652 976C1645 983 1622 984 1613 977C1608 970 1607 960 1609.5 955Z" fill="#a39682"/>
<path d="M1611 940L1617 950M1648 937L1645 949" stroke="#e8d8cf" stroke-width="2" fill="none" opacity="0.6"/>
<path d="M1622 947L1625 956M1629 945V955M1636 946L1634 955M1610 964L1616 966M1612 971L1618 971M1654 962L1647 966M1652 970L1645 970" stroke="#463c32" stroke-width="1.6" fill="none"/>
<ellipse cx="1628.5" cy="974" rx="8" ry="5.5" fill="#e4dcd0"/>
<circle cx="1618.3" cy="961.2" r="4.2" fill="#dcae3c"/><circle cx="1637.8" cy="960" r="4.2" fill="#dcae3c"/>
<circle cx="1618.6" cy="961.2" r="1.8" fill="#2a2218"/><circle cx="1638" cy="960" r="1.8" fill="#2a2218"/>
<path d="M1625.5 967H1631.5L1628.5 971Z" fill="#c98a78"/>
<!-- paws -->
<ellipse cx="1599" cy="1013" rx="14" ry="13" fill="#9a8e7d"/>
<path d="M1592 1008C1596 1006 1600 1007 1603 1010M1590 1015C1594 1013 1599 1014 1602 1017" stroke="#5a5044" stroke-width="1.3" fill="none"/>
<ellipse cx="1691" cy="1025" rx="13" ry="16" fill="#9a8e7d"/>
<!-- sign -->
<path d="M1602.6 997L1688.8 996L1689 1050L1603 1051Z" fill="#e4d1b4"/>
<ellipse cx="1686" cy="1030" rx="8" ry="9" fill="#a89c8a"/>
<g font-family="Liberation Sans" fill="#201a14" text-anchor="middle">
<text x="1648" y="1013.5" font-size="14" textLength="42" lengthAdjust="spacingAndGlyphs">REMIX</text>
<text x="1646" y="1027.5" font-size="12.5" textLength="46" lengthAdjust="spacingAndGlyphs">PARENT</text>
<text x="1648.5" y="1042.5" font-size="15" textLength="56" lengthAdjust="spacingAndGlyphs">MISSING</text>
</g>
</g>
</svg>

<!-- PROMPT CARD -->
<div class="a" style="left:150px;top:66px;width:1578px;height:324px;background:#fff;border:1px solid #efefef;border-radius:16px;box-shadow:0 2px 6px rgba(0,0,0,0.03)"></div>
<div class="a" style="left:1358px;top:67px;width:1px;height:322px;background:#f0f0f0"></div>

<!-- logo -->
<svg style="left:0;top:70px" width="32" height="34" viewBox="0 70 32 34">
<g fill="none" stroke="#383838" stroke-width="1.9" stroke-linecap="round" stroke-linejoin="round">
<path d="M12 77C14.5 76.5 16.5 75.5 18.6 75.5C22 75.5 25.5 78 27 82.5C28.5 85 28.5 87.5 27.4 89C28.5 92 27.5 95.5 25.2 97C23 99.5 20.5 100 18.6 99.6C16 99.6 14.5 99 12.6 98.3"/>
<path d="M12 77C15 77 16.5 79 16.5 81C16.5 83 15.5 83.9 14 83.9H5.4"/>
<path d="M14 83.9C17.5 84 17.5 91.3 14 91.4H5.4"/>
<path d="M14 91.4C17.5 91.5 17 97.5 12.6 98.3"/>
<path d="M8.5 80.7H13.2M2.8 88H13.5M8.5 94.9H13.2"/>
<path d="M17 80.2C19.5 79.5 22 80.5 23.3 83.2"/>
<path d="M17 85.5C18.5 84 20.5 84.5 21.3 86.8C22.3 84.8 24.5 84.5 26 86"/>
<path d="M17.2 87.8C19.5 87.3 21 88.3 22 90C23 91.8 25 92.5 27 91.5"/>
<path d="M17 93C19 92.8 20.5 93.5 20.8 95.5C21 97 20.5 98.5 19.5 99.5"/>
<path d="M21 93.8C22.5 93.3 24.5 94 25.5 96"/>
</g>
</svg>
<div class="t" style="left:36px;top:78px;font-size:23px;color:#333;letter-spacing:-0.55px">ideogram</div>
<svg style="left:20px;top:140px" width="16" height="22" viewBox="20 140 16 22"><path d="M31.5 144L24 151L31.5 158" fill="none" stroke="#333" stroke-width="2" stroke-linecap="round" stroke-linejoin="round"/></svg>

<!-- prompt text -->
<div class="t" style="left:166px;top:79.2px;font-size:15px;color:#777;letter-spacing:0.2px">A nostalgic and charming vintage-style t-shirt design, featuring the quote "My passion is BIRDS" in bold, uppercase letters. The text has a slightly distressed effect,</div>
<div class="t" style="left:166px;top:100.7px;font-size:15px;color:#777;letter-spacing:0.02px">giving it a nostalgic feel. The top section of the quote, "LIFE IS BETTER", is placed above the center, while the bottom section, "WITH BIRDS", sits below it. The t-shirt is</div>
<div class="t" style="left:166px;top:122.2px;font-size:15px;color:#777;letter-spacing:0.18px">set against a black background, and in the center, a stylized sunset scene is presented. The sunset features horizontal stripes in faded retro colors, including blue,</div>
<div class="t" style="left:166px;top:143.7px;font-size:15px;color:#777;letter-spacing:0.16px">yellow, orange, and red. Silhouettes of birds are overlaid on the sunset, either perched on branches or in flight, creating a dynamic focal point. To enhance the vintage</div>
<div class="t" style="left:166px;top:165.2px;font-size:15px;color:#777;letter-spacing:0.15px">aesthetic and provide balance to the design, horizontal lines flank the words "WITH BIRDS, typography, illustration</div>
<!-- spellcheck -->
<div class="a" style="left:785px;top:115px;width:46px;height:0;border-top:1.5px dotted #e7a0a0"></div>
<div class="a" style="left:458px;top:137.5px;width:44px;height:0;border-top:1.5px dotted #e7a0a0"></div>
<div class="a" style="left:519px;top:137.5px;width:53px;height:0;border-top:1.5px dotted #e7a0a0"></div>
<div class="a" style="left:1124px;top:137.5px;width:44px;height:0;border-top:1.5px dotted #e7a0a0"></div>
<!-- text cursor -->
<div class="a" style="left:769.5px;top:79px;width:1px;height:17px;background:#555"></div>
<!-- mouse highlight circle -->
<div class="a" style="left:663px;top:64px;width:74px;height:74px;border-radius:50%;border:4px solid rgba(236,234,40,0.92)"></div>
<svg style="left:694px;top:92px" width="10" height="18" viewBox="0 0 10 18"><path d="M2 1H8M5 1V17M2 17H8" stroke="#222" stroke-width="1.4" fill="none"/></svg>
<!-- eraser -->
<svg style="left:1316px;top:83px" width="24" height="24" viewBox="0 0 24 24"><g fill="none" stroke="#555" stroke-width="1.6" stroke-linejoin="round"><path d="M4.5 14.5L14 5L20 11L10.5 20.5H9L4.5 16Z"/><path d="M8 11L14 17M10 20.5H20"/></g></svg>

<!-- chips -->
<div class="a" style="left:167px;top:342px;width:57px;height:29px;border:1px solid #f2f2f2;border-radius:8px"></div>
<div class="a" style="left:231px;top:342px;width:87px;height:29px;border:1px solid #f2f2f2;border-radius:8px"></div>
<div class="a" style="left:326px;top:342px;width:80px;height:29px;border:1px solid #f2f2f2;border-radius:8px"></div>
<div class="a" style="left:413px;top:342px;width:92px;height:29px;border:1px solid #f2f2f2;border-radius:8px"></div>
<div class="a" style="left:512px;top:342px;width:81px;height:29px;border:1px solid #f2f2f2;border-radius:8px"></div>
<div class="a" style="left:601px;top:342px;width:61px;height:29px;border:1px solid #f2f2f2;border-radius:8px"></div>
<div class="t" style="left:177.5px;top:350px;font-size:14px;color:#8c8c8c;letter-spacing:0.1px">photo</div>
<div class="t" style="left:243px;top:350px;font-size:14px;color:#8c8c8c;letter-spacing:0.08px">illustration</div>
<div class="t" style="left:338px;top:350px;font-size:14px;color:#8c8c8c;letter-spacing:-0.3px">3d render</div>
<div class="t" style="left:425px;top:350px;font-size:14px;color:#8c8c8c;letter-spacing:-0.1px">typography</div>
<div class="t" style="left:524px;top:350px;font-size:14px;color:#8c8c8c;letter-spacing:-0.1px">cinematic</div>
<div class="t" style="left:612.5px;top:350px;font-size:14px;color:#8c8c8c;letter-spacing:0px">poster</div>
<div class="a" style="left:677px;top:354px;width:4px;height:4px;border-radius:50%;background:#444"></div>
<div class="a" style="left:683.5px;top:354px;width:4px;height:4px;border-radius:50%;background:#444"></div>
<div class="a" style="left:690px;top:354px;width:4px;height:4px;border-radius:50%;background:#444"></div>

<!-- settings pane icons -->
<svg style="left:1376px;top:82px" width="340" height="28" viewBox="1376 82 340 28">
<g fill="none" stroke="#555" stroke-width="1.7" stroke-linecap="round" stroke-linejoin="round">
<path d="M1380.5 104.5L1381.5 99.5L1393 88A2.1 2.1 0 0 1 1396.5 91.5L1385 103Z"/>
<path d="M1426 86.5H1440M1433 104V90.5M1427.5 96L1433 90.5L1438.5 96"/>
<path d="M1691 88.5L1705 102.5M1705 88.5L1691 102.5" stroke-width="1.8"/>
</g>
</svg>
<div class="t" style="left:1377.5px;top:171px;font-size:13.5px;color:#8a8a8a;letter-spacing:-0.2px">Magic Prompt</div>
<svg style="left:1462px;top:171px" width="12" height="12" viewBox="0 0 12 12"><circle cx="6" cy="6" r="4.5" fill="none" stroke="#999" stroke-width="1"/><path d="M6 5V9M6 3.2V3.8" stroke="#999" stroke-width="1.1"/></svg>
<div class="t" style="left:1377.5px;top:219px;font-size:13.5px;color:#8a8a8a;letter-spacing:-0.1px">Aspect ratio</div>
<div class="t" style="left:1377.5px;top:267.5px;font-size:13.5px;color:#8a8a8a;letter-spacing:-0.1px">Visibility</div>

<div class="a" style="left:1500px;top:158px;width:218px;height:38px;border-radius:9px;background:#f5f5f5"></div>
<div class="a" style="left:1574px;top:160px;width:69px;height:34px;border-radius:7px;background:#fff;box-shadow:0 1px 1px rgba(0,0,0,0.03)"></div>
<div class="t" style="left:1522px;top:170px;font-size:14px;color:#777">Auto</div>
<div class="t" style="left:1599px;top:170px;font-size:14px;color:#333">On</div>
<div class="t" style="left:1670.5px;top:170px;font-size:14px;color:#777">Off</div>

<div class="a" style="left:1500px;top:207px;width:218px;height:37px;border-radius:9px;background:#f5f5f5"></div>
<div class="a" style="left:1563px;top:210px;width:58px;height:32px;border-radius:7px;background:#fff"></div>
<svg style="left:1500px;top:207px" width="218" height="37" viewBox="1500 207 218 37">
<g fill="none" stroke="#666" stroke-width="1.3"><rect x="1515.5" y="219" width="9" height="13.5" rx="1.5"/><rect x="1578.5" y="219" width="15" height="13.5" rx="1.5"/><rect x="1634.5" y="222" width="14.5" height="8" rx="1.5"/><path d="M1695.5 224.5L1699.5 228.5L1703.5 224.5"/></g>
</svg>
<div class="t" style="left:1529.5px;top:220px;font-size:13px;color:#888;letter-spacing:-0.2px">9:16</div>
<div class="t" style="left:1595px;top:220px;font-size:13px;color:#555;letter-spacing:-0.2px">1:1</div>
<div class="t" style="left:1651px;top:220px;font-size:13px;color:#888;letter-spacing:-0.3px">16:9</div>

<div class="a" style="left:1500px;top:257px;width:218px;height:36px;border-radius:9px;background:#f5f5f5"></div>
<div class="a" style="left:1609px;top:259.5px;width:106px;height:31px;border-radius:7px;background:#fff;box-shadow:0 1px 2px rgba(0,0,0,0.05)"></div>
<div class="t" style="left:1536px;top:268px;font-size:14px;color:#777;letter-spacing:-0.1px">Public</div>
<div class="t" style="left:1640.5px;top:268px;font-size:14px;color:#333;letter-spacing:-0.1px">Private</div>

<div class="a" style="left:1516px;top:335px;width:36px;height:39px;border-radius:8px;border:1px solid #f6f6f6"></div>
<svg style="left:1522px;top:345px" width="24" height="22" viewBox="1522 345 24 22"><g fill="none" stroke="#555" stroke-width="1.5"><path d="M1525.5 351.5H1533.5M1539 351.5H1543.5M1525.5 360.5H1528M1534 360.5H1543.5"/><circle cx="1536.5" cy="351.5" r="2.5"/><circle cx="1531" cy="360.5" r="2.5"/></g></svg>
<div class="a" style="left:1560.5px;top:337.5px;width:156.5px;height:37px;border-radius:8px;background:#323234"></div>
<div class="t" style="left:1606px;top:348px;font-size:16px;color:#f2f2f2;letter-spacing:-0.1px">Generate</div>

<!-- bottom line -->
<div class="a" style="left:0;top:1064px;width:1920px;height:14.5px;background:linear-gradient(rgba(240,240,240,0),rgba(226,226,226,0.9))"></div>
<div class="a" style="left:0;top:1078.5px;width:1920px;height:1.5px;background:#6a6a6a"></div>

</body></html>
